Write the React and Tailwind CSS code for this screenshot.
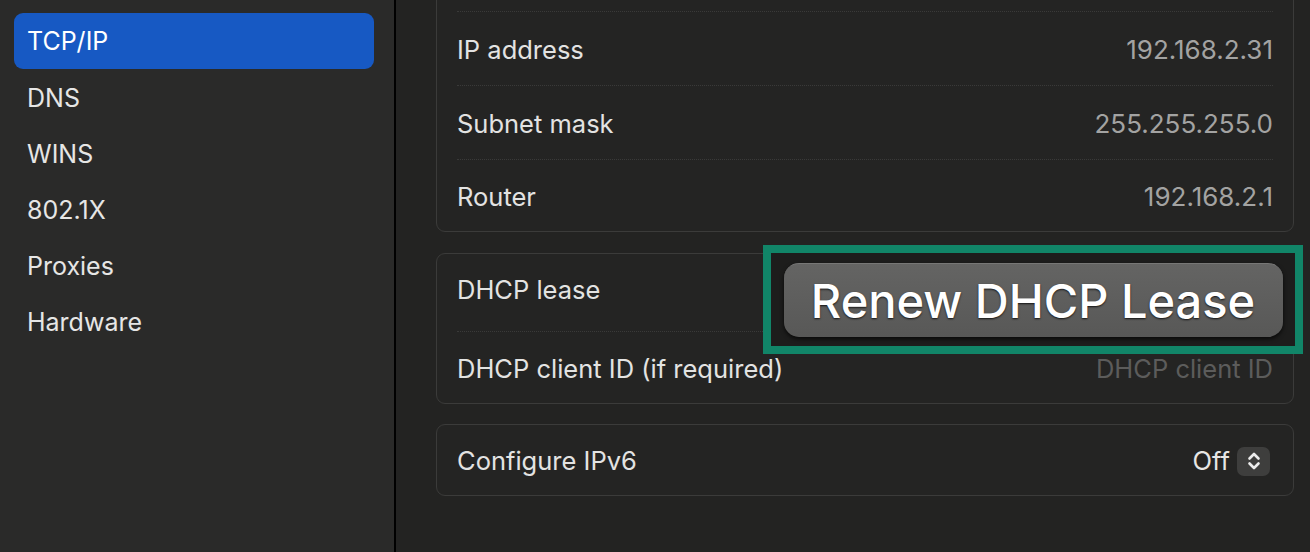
import React from 'react';

const navItems = ['TCP/IP', 'DNS', 'WINS', '802.1X', 'Proxies', 'Hardware'];

const tcpRows = [
  { label: '', value: '' },
  { label: 'IP address', value: '192.168.2.31' },
  { label: 'Subnet mask', value: '255.255.255.0' },
  { label: 'Router', value: '192.168.2.1' },
];

const Divider = () => <div className="mx-5 border-t border-dotted border-[#3a3a39]" />;

const UpDownStepper = () => (
  <div className="w-[33px] h-[29px] rounded-[7px] bg-[#3e3e3d] flex items-center justify-center">
    <svg width="16" height="22" viewBox="0 0 16 22" fill="none" stroke="#ececec" strokeWidth="2.6" strokeLinecap="round" strokeLinejoin="round">
      <path d="M3.5 8.5 8 4l4.5 4.5" />
      <path d="M3.5 13.5 8 18l4.5-4.5" />
    </svg>
  </div>
);

const Row = ({ label, value, valueClass = 'text-[#a3a3a2] text-[26px]', height = 'h-[73px]', children }) => (
  <div className={`${height} flex items-center justify-between px-5 pt-[2px]`}>
    <span className="text-[#e3e3e2]">{label}</span>
    {children ?? <span className={valueClass}>{value}</span>}
  </div>
);

export default function App() {
  return (
    <div className="w-[1310px] h-[552px] flex overflow-hidden bg-[#232322] text-[25.5px] leading-none font-['Inter','Liberation_Sans',sans-serif]">
      {/* Sidebar */}
      <aside className="w-[396px] shrink-0 bg-[#2a2a29] border-r-2 border-black pl-[14px] pr-[20px] pt-[13px] text-[25px]">
        {navItems.map((item, i) => (
          <div
            key={item}
            className={`h-[56px] flex items-center pl-[13px] rounded-[9px] ${
              i === 0 ? 'bg-[#1759c3] text-white' : 'text-[#e6e6e5] translate-y-[1px]'
            }`}
          >
            {item}
          </div>
        ))}
      </aside>

      {/* Detail pane */}
      <main className="flex-1 pl-[40px] pr-[16px]">
        <section className="-mt-[63px] rounded-[9px] border border-[#3b3b3a] bg-[#242423]">
          {tcpRows.map((row, i) => (
            <React.Fragment key={i}>
              {i > 0 && <Divider />}
              <Row label={row.label} value={row.value} height={i === 3 ? 'h-[71px]' : 'h-[73px]'} />
            </React.Fragment>
          ))}
        </section>

        <section className="relative mt-[21px] rounded-[9px] border border-[#3b3b3a] bg-[#242423]">
          <div className="h-[77px] flex items-center px-5 pb-[6px]">
            <span className="text-[#e3e3e2]">DHCP lease</span>
          </div>
          <Divider />
          <Row label="DHCP client ID (if required)" value="DHCP client ID" valueClass="text-[#5c5c5b]" height="h-[71px]" />

          {/* Highlighted renew button */}
          <div className="absolute left-[326px] top-[-9px] w-[540px] h-[109px] border-[8px] border-[#118568] bg-[#1d1d1c] flex items-center justify-center">
            <button className="w-[499px] h-[74px] rounded-[15px] bg-gradient-to-b from-[#646463] to-[#585857] border-t border-[#777776] shadow-[0_2px_4px_rgba(0,0,0,0.7)] text-white text-[47px] font-medium [text-shadow:0_1px_2px_rgba(0,0,0,0.8)]">
              Renew DHCP Lease
            </button>
          </div>
        </section>

        <section className="mt-[20px] rounded-[9px] border border-[#3b3b3a] bg-[#242423]">
          <Row label="Configure IPv6" height="h-[70px]">
            <div className="flex items-center gap-[7px] mr-[3px]">
              <span className="text-[#e6e6e5]">Off</span>
              <UpDownStepper />
            </div>
          </Row>
        </section>
      </main>
    </div>
  );
}
